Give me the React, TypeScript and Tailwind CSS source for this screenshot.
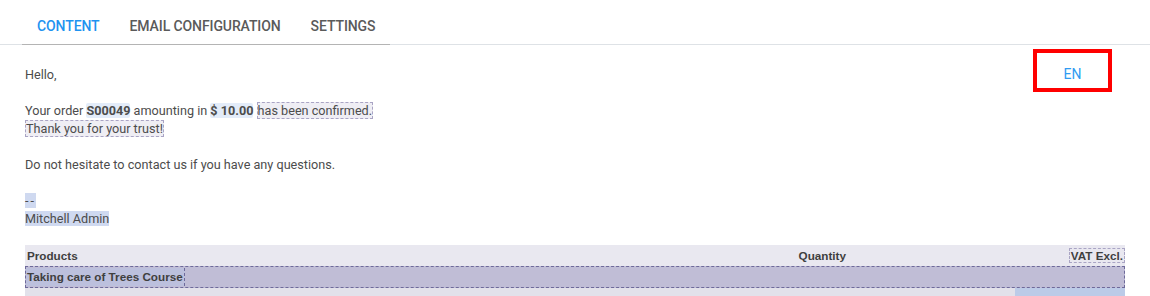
import React from "react";

const tabs = ["CONTENT", "EMAIL CONFIGURATION", "SETTINGS"];

export default function App() {
  return (
    <div
      className="w-[1150px] h-[296px] overflow-hidden bg-white text-[#4c4c4c]"
      style={{ fontFamily: "Roboto, 'Noto Sans', sans-serif" }}
    >
      {/* tabs */}
      <div className="border-b border-[#dee2e6] h-[45px] flex items-end pl-[22px]">
        <ul className="flex border-b border-[#b4b4b4] -mb-px">
          {tabs.map((t, i) => (
            <li
              key={t}
              className={`px-[15px] h-[44px] flex items-center pt-[8px] text-[14px] font-medium tracking-[-0.1px] ${
                i === 0 ? "text-[#1f93f0]" : "text-[#5a5a5a]"
              }`}
            >
              {t}
            </li>
          ))}
        </ul>
      </div>

      <div className="relative px-[25px] pt-[21px] text-[12.65px] leading-[18px]">
        {/* language box */}
        <div className="absolute right-[38px] top-[4px] w-[79px] h-[43px] border-[4px] border-[#ff0000] flex items-center justify-center">
          <span className="text-[14px] text-[#2f9bf2] mt-[6px]">EN</span>
        </div>

        <p>Hello,</p>
        <p className="mt-[18px]">
          Your order{" "}
          <span className="bg-[#e3ecf9] font-bold rounded-[2px]">S00049</span>{" "}
          amounting in{" "}
          <span className="bg-[#e3ecf9] font-bold rounded-[2px]">$ 10.00</span>{" "}
          <span className="bg-[#efeef4] border border-dashed border-[#a9a4c4]">
            has been confirmed.
          </span>
          <br />
          <span className="bg-[#efeef4] border border-dashed border-[#a9a4c4]">
            Thank you for your trust!
          </span>
        </p>
        <p className="mt-[18px]">
          Do not hesitate to contact us if you have any questions.
        </p>
        <p className="mt-[18px]">
          <span className="bg-[#cfd9f0] tracking-[2px]">--</span>
          <br />
          <span className="bg-[#cfd9f0]">Mitchell Admin</span>
        </p>

        {/* table */}
        <div
          className="mt-[17px] text-[11.7px] text-[#3f3f3f]"
          style={{ fontFamily: "'Liberation Sans', Arial, sans-serif" }}
        >
          <div className="flex items-center h-[21px] bg-[#e9e8f0] font-bold pl-[2px]">
            <div className="flex-1">Products</div>
            <div className="w-[200px] text-right">Quantity</div>
            <div className="w-[279px] text-right">
              <span className="border border-dashed border-[#a9a4c4] px-px">
                VAT Excl.
              </span>
            </div>
          </div>
          <div className="flex items-center h-[22px] bg-[#c0bdd6] border border-dashed border-[#6e6a9a] font-bold">
            <span className="bg-[#bcc0dd] border-r border-dashed border-[#6e6a9a] pl-px pr-px">
              Taking care of Trees Course
            </span>
          </div>
          <div className="flex h-[22px] bg-[#e2e1ea]">
            <div className="flex-1 text-right pr-[10px] pt-[3px] font-bold">Delivery:</div>
            <div className="w-[110px] bg-[#bccbe8] text-right pr-[2px] pt-[3px]">$ 0.00</div>
          </div>
        </div>
      </div>
    </div>
  );
}
